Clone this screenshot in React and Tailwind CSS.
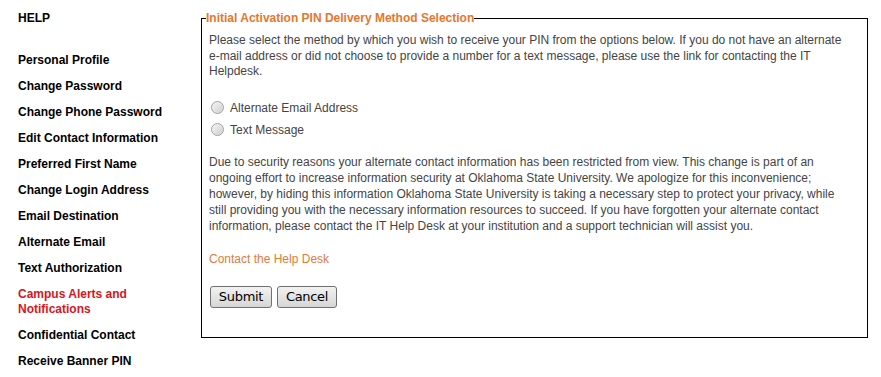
import React from "react";

const items = [
  "Personal Profile",
  "Change Password",
  "Change Phone Password",
  "Edit Contact Information",
  "Preferred First Name",
  "Change Login Address",
  "Email Destination",
  "Alternate Email",
  "Text Authorization",
];

function Radio({ label }) {
  return (
    <label className="flex items-center h-[22px]">
      <span className="ml-[2px] w-[13px] h-[13px] rounded-full border border-[#a0a0a0] bg-gradient-to-br from-[#f6f6f6] to-[#cfcfcf] shadow-[inset_0_0_1px_#fff]" />
      <span className="ml-[6px]">{label}</span>
    </label>
  );
}

export default function App() {
  return (
    <div className="flex bg-white min-h-[377px] font-['Liberation_Sans',Arial,sans-serif] text-[12px]">
      <nav className="w-[201px] shrink-0 pl-[18px] pt-[11px] font-bold text-black leading-[15px]">
        <div className="mb-[27px]">HELP</div>
        <div className="flex flex-col gap-[11px]">
          {items.map((t) => (
            <div key={t}>{t}</div>
          ))}
          <div className="text-[#d9141e] w-[130px]">Campus Alerts and Notifications</div>
          <div>Confidential Contact</div>
          <div>Receive Banner PIN</div>
        </div>
      </nav>
      <div className="pt-[11px]">
        <fieldset className="w-[667px] h-[327px] border border-black px-[7px] text-[#444]">
          <legend className="-ml-[3px] font-bold text-[#e8762d] leading-[14px]">
            Initial Activation PIN Delivery Method Selection
          </legend>
          <p className="leading-[15.5px] mt-[8px] pr-[10px]">
            Please select the method by which you wish to receive your PIN from the options below. If you do not have an alternate e-mail address or did not choose to provide a number for a text message, please use the link for contacting the IT Helpdesk.
          </p>
          <div className="mt-[17px]">
            <Radio label="Alternate Email Address" />
            <Radio label="Text Message" />
          </div>
          <p className="leading-[16px] mt-[13px] pr-[10px]">
            Due to security reasons your alternate contact information has been restricted from view. This change is part of an ongoing effort to increase information security at Oklahoma State University. We apologize for this inconvenience; however, by hiding this information Oklahoma State University is taking a necessary step to protect your privacy, while still providing you with the necessary information resources to succeed. If you have forgotten your alternate contact information, please contact the IT Help Desk at your institution and a support technician will assist you.
          </p>
          <div className="mt-[16px] text-[#e07b39]">Contact the Help Desk</div>
          <div className="mt-[18px] flex gap-[5px] ml-[1px]">
            <button className="w-[62px] h-[22px] rounded-[3px] border border-[#707070] bg-gradient-to-b from-[#f2f2f2] to-[#d6d6d6] text-black text-[13px] font-['DejaVu_Sans',sans-serif] tracking-[-0.3px]">
              Submit
            </button>
            <button className="w-[60px] h-[22px] rounded-[3px] border border-[#707070] bg-gradient-to-b from-[#f2f2f2] to-[#d6d6d6] text-black text-[13px] font-['DejaVu_Sans',sans-serif] tracking-[-0.3px]">
              Cancel
            </button>
          </div>
        </fieldset>
      </div>
    </div>
  );
}
